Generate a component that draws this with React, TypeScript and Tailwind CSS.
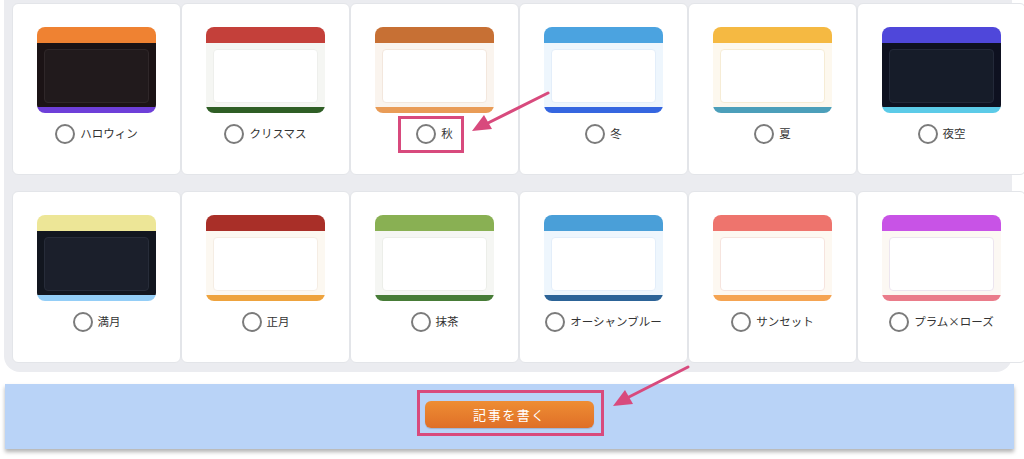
import React from "react";

type Theme = {
    name: string;
    top: string;
    body: string;
    inner: string;
    bottom: string;
};

const themes: Theme[] = [
    { name: "ハロウィン", top: "bg-[#ef8232]", body: "bg-[#1b1315]", inner: "bg-[#211a1c] border-[#2f2729]", bottom: "bg-[#6e3fd9]" },
    { name: "クリスマス", top: "bg-[#c4403a]", body: "bg-[#f5f6f3]", inner: "bg-white border-[#eeefec]", bottom: "bg-[#2f5e25]" },
    { name: "秋", top: "bg-[#c77034]", body: "bg-[#faf4ee]", inner: "bg-white border-[#f3e7dd]", bottom: "bg-[#e99c57]" },
    { name: "冬", top: "bg-[#4ba3e0]", body: "bg-[#eef6fd]", inner: "bg-white border-[#e3eefa]", bottom: "bg-[#3566e0]" },
    { name: "夏", top: "bg-[#f5b942]", body: "bg-[#fdf8ee]", inner: "bg-white border-[#f6ecd5]", bottom: "bg-[#4c9fba]" },
    { name: "夜空", top: "bg-[#4f47da]", body: "bg-[#0e1120]", inner: "bg-[#161c29] border-[#232939]", bottom: "bg-[#5ccbe8]" },
    { name: "満月", top: "bg-[#ede697]", body: "bg-[#12161f]", inner: "bg-[#1b1f2b] border-[#272c39]", bottom: "bg-[#94cef7]" },
    { name: "正月", top: "bg-[#a92f28]", body: "bg-[#fcf8f1]", inner: "bg-white border-[#f5ede4]", bottom: "bg-[#eea33e]" },
    { name: "抹茶", top: "bg-[#89b053]", body: "bg-[#f5f6f3]", inner: "bg-white border-[#eceee9]", bottom: "bg-[#477c37]" },
    { name: "オーシャンブルー", top: "bg-[#4a9fd8]", body: "bg-[#eef6fd]", inner: "bg-white border-[#e3eefa]", bottom: "bg-[#2c6397]" },
    { name: "サンセット", top: "bg-[#ee746d]", body: "bg-[#fdf8f1]", inner: "bg-white border-[#f6e4de]", bottom: "bg-[#f5a452]" },
    { name: "プラム×ローズ", top: "bg-[#c853e6]", body: "bg-[#fcf8f3]", inner: "bg-white border-[#ece5ef]", bottom: "bg-[#ea7c8a]" },
];

function Preview({ t }: { t: Theme }) {
    return (
        <div className="w-[119px] h-[86px] rounded-lg overflow-hidden flex flex-col">
            <div className={`h-[16px] ${t.top}`} />
            <div className={`flex-1 px-[7px] pt-[6px] pb-[4px] ${t.body}`}>
                <div className={`h-full rounded-[4px] border ${t.inner}`} />
            </div>
            <div className={`h-[6px] ${t.bottom}`} />
        </div>
    );
}

function ThemeCard({ t }: { t: Theme }) {
    return (
        <div className="h-[172px] bg-white border border-[#e3e5e9] rounded-md flex flex-col items-center pt-[23px]">
            <Preview t={t} />
            <label className="mt-[11px] flex items-center gap-[5px] text-[11.5px] text-[#333]">
                <span className="size-[20px] rounded-full border-2 border-[#7b7b7b] bg-white" />
                <span>{t.name}</span>
            </label>
        </div>
    );
}

export default function App() {
    return (
        <div
            className="relative w-[1024px] h-[459px] overflow-hidden bg-white"
            style={{ fontFamily: '"Noto Sans CJK JP", "Noto Sans", sans-serif' }}
        >
            <div className="ml-[4px] w-[1008px] bg-[#ebecf0] rounded-b-2xl pl-[8px] pt-[3px] pb-[9px]">
                <div className="grid grid-cols-[repeat(6,169px)] gap-y-[16px]">
                    {themes.map((t) => (
                        <ThemeCard key={t.name} t={t} />
                    ))}
                </div>
            </div>

            <div className="mt-[12px] ml-[5px] w-[1009px] h-[65px] pb-[4px] bg-[#b9d3f7] shadow-[0_3px_4px_rgba(0,0,0,0.3)] flex items-center justify-center">
                <button className="w-[169px] h-[27px] rounded-[6px] bg-gradient-to-b from-[#ee8d33] to-[#df6f28] text-white text-[13px] tracking-[0.12em] shadow-[0_1px_1px_rgba(0,0,0,0.15)]">
                    記事を書く
                </button>
            </div>

            {/* annotations */}
            <div className="absolute left-[398px] top-[116px] w-[66px] h-[37px] border-[3px] border-[#d84a7d]" />
            <div className="absolute left-[417px] top-[390px] w-[187px] h-[46px] border-[3px] border-[#d84a7d]" />
            <svg className="absolute inset-0 pointer-events-none" width="1024" height="459">
                <line x1="548" y1="93" x2="484" y2="125" stroke="#d84a7d" strokeWidth="3" strokeLinecap="round" />
                <polygon points="472,131 484,115 492,129" fill="#d84a7d" />
                <line x1="688" y1="367" x2="625" y2="399" stroke="#d84a7d" strokeWidth="3" strokeLinecap="round" />
                <polygon points="613,406 625,390 633,404" fill="#d84a7d" />
            </svg>
        </div>
    );
}
